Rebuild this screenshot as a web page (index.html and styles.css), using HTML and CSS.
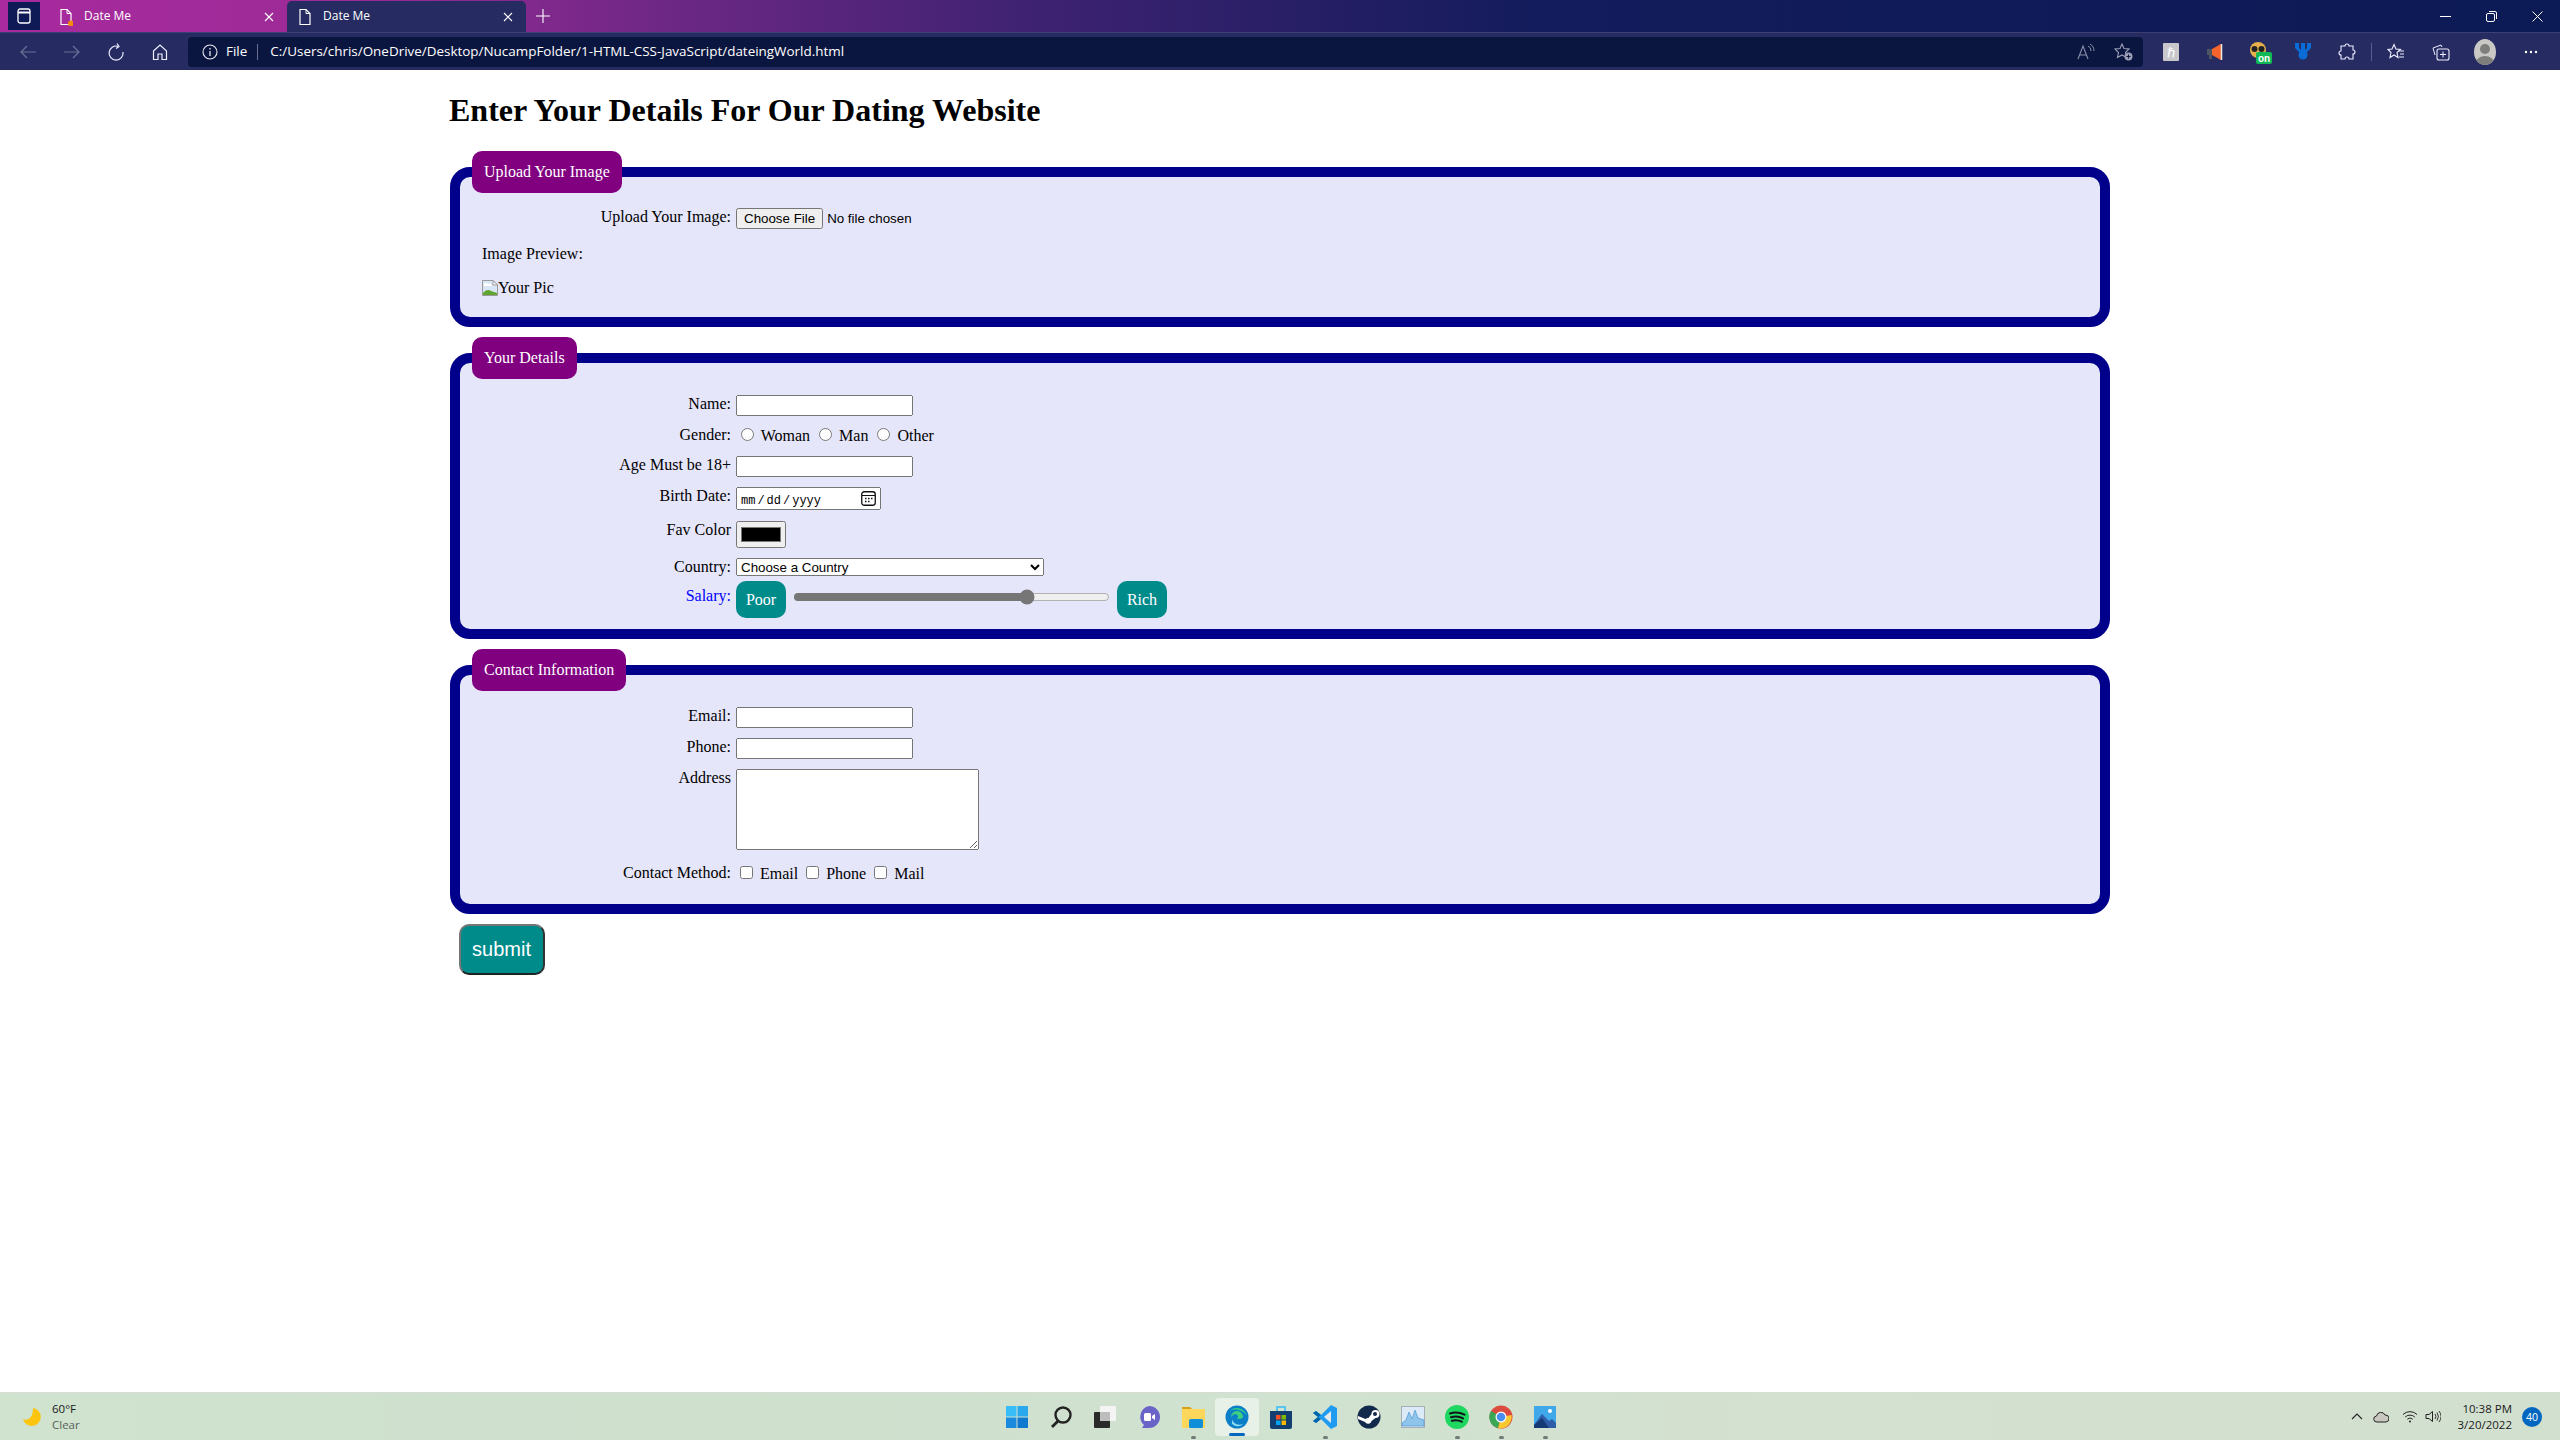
FILE: index.html
```html
<!DOCTYPE html>
<html lang="en">
<head>
<meta charset="utf-8">
<title>Date Me</title>
<link rel="stylesheet" href="styles.css">
</head>
<body>
<div class="browser">
  <header class="tabstrip">
    <div class="appbtn"><svg width="16" height="18" viewBox="0 0 16 18"><rect x="2" y="2" width="12" height="14" rx="2" fill="none" stroke="#fff" stroke-width="1.3"/><path d="M2 5.500h12" stroke="#fff" stroke-width="2"/></svg></div>
    <div class="tab tab-inactive">
      <svg class="docicon" width="14" height="18" viewBox="0 0 14 18"><path d="M2 1.500h6l4 4v11H2z" fill="none" stroke="#fff" stroke-width="1.2"/><path d="M8 1.500v4h4" fill="none" stroke="#fff" stroke-width="1"/><circle cx="12" cy="15.500" r="3" fill="#f58a0b"/></svg>
      <span class="tabtitle">Date Me</span>
      <svg class="tabclose" width="10" height="10" viewBox="0 0 10 10"><path d="M1 1l8 8M9 1l-8 8" stroke="#fff" stroke-width="1.1"/></svg>
    </div>
    <div class="tab tab-active">
      <svg class="docicon" width="14" height="18" viewBox="0 0 14 18"><path d="M2 1.500h6l4 4v11H2z" fill="none" stroke="#fff" stroke-width="1.2"/><path d="M8 1.500v4h4" fill="none" stroke="#fff" stroke-width="1"/></svg>
      <span class="tabtitle">Date Me</span>
      <svg class="tabclose" width="10" height="10" viewBox="0 0 10 10"><path d="M1 1l8 8M9 1l-8 8" stroke="#fff" stroke-width="1.1"/></svg>
    </div>
    <svg class="newtab" width="16" height="16" viewBox="0 0 16 16"><path d="M8 1v14M1 8h14" stroke="#fff" stroke-width="1.1"/></svg>
    <div class="winctl">
      <span class="winbtn"><svg width="11" height="11" viewBox="0 0 11 11"><path d="M0 5.500h11" stroke="#fff"/></svg></span>
      <span class="winbtn"><svg width="11" height="11" viewBox="0 0 11 11"><rect x=".5" y="2.500" width="8" height="8" rx="1.500" fill="none" stroke="#fff"/><path d="M3 .5h6a1.500 1.500 0 0 1 1.500 1.500v6" fill="none" stroke="#fff"/></svg></span>
      <span class="winbtn"><svg width="11" height="11" viewBox="0 0 11 11"><path d="M.5.500l10 10M10.500.500l-10 10" stroke="#fff"/></svg></span>
    </div>
  </header>

  <nav class="toolbar">
    <span class="slot"><svg width="18" height="16" viewBox="0 0 18 16"><path d="M17 8H2M8 2L2 8l6 6" fill="none" stroke="#6b7096" stroke-width="1.200"/></svg></span>
    <span class="slot"><svg width="18" height="16" viewBox="0 0 18 16"><path d="M1 8h15M10 2l6 6-6 6" fill="none" stroke="#6b7096" stroke-width="1.200"/></svg></span>
    <span class="slot"><svg width="18" height="18" viewBox="0 0 18 18"><path d="M11 3.300A7 7 0 1 0 16 9" fill="none" stroke="#eef" stroke-width="1.200"/><path d="M10 .5l2 3-3 2" fill="none" stroke="#eef" stroke-width="1.200"/></svg></span>
    <span class="slot"><svg width="18" height="18" viewBox="0 0 18 18"><path d="M2.500 8L9 2l6.500 6v8.500H11V11H7v5.500H2.500z" fill="none" stroke="#eef" stroke-width="1.200"/></svg></span>
    <div class="address">
      <svg width="16" height="16" viewBox="0 0 16 16"><circle cx="8" cy="8" r="7" fill="none" stroke="#e8e8f0" stroke-width="1.100"/><path d="M8 7v5M8 4v1.400" stroke="#e8e8f0" stroke-width="1.300"/></svg>
      <span class="scheme">File</span>
      <span class="addr-sep"></span>
      <span class="url">C:/Users/chris/OneDrive/Desktop/NucampFolder/1-HTML-CSS-JavaScript/dateingWorld.html</span>
      <span class="addr-icons">
        <svg width="18" height="18" viewBox="0 0 18 18"><path d="M1 16L6 3l5 13M3 12h6" fill="none" stroke="#8a8ea8" stroke-width="1.100"/><path d="M11 3a5 5 0 0 1 3 5M13 1a8 8 0 0 1 4 7" fill="none" stroke="#8a8ea8"/></svg>
        <svg width="20" height="20" viewBox="0 0 20 20"><path d="M8 2l2 4.500 5 .5-3.500 3.500 1 5-4.500-2.500L3.500 15.500l1-5L1 7l5-.5z" fill="none" stroke="#9a9db4" stroke-width="1.100"/><circle cx="14.500" cy="14.500" r="4" fill="#9a9db4"/><path d="M14.500 12.500v4M12.500 14.500h4" stroke="#0b1640"/></svg>
      </span>
    </div>
    <span class="slot slot-first"><svg width="16" height="18" viewBox="0 0 16 18"><rect width="16" height="18" rx="1" fill="#c8c8cc"/><text x="4" y="14" class="ext-h">ℏ</text></svg></span>
    <span class="slot"><svg width="18" height="18" viewBox="0 0 18 18"><path d="M6 6l9-5v16L6 12z" fill="#f4642a"/><path d="M15.500 1v16" stroke="#e8e8e8" stroke-width="1.500"/><rect x="1" y="6" width="5" height="6" fill="#4c5560"/><rect x="3" y="12" width="3" height="4" fill="#4c5560"/></svg></span>
    <span class="slot slot-owl"><svg width="24" height="24" viewBox="0 0 24 24"><circle cx="9" cy="10" r="8" fill="#e8b04a"/><circle cx="5.500" cy="9" r="3" fill="#222"/><circle cx="12.500" cy="9" r="3" fill="#222"/><rect x="7" y="12" width="16" height="12" rx="2" fill="#0fb956"/><text x="9" y="22" class="ext-on">on</text></svg></span>
    <span class="slot"><svg width="18" height="20" viewBox="0 0 18 20"><path d="M1 1h4v5l2 2V1h4v7l2-2V1h4v5l-5 5H6L1 6z" fill="#0a6cd6"/><circle cx="9" cy="13" r="4.500" fill="#0a6cd6"/></svg></span>
    <span class="slot"><svg width="18" height="18" viewBox="0 0 18 18"><path d="M7 3a2 2 0 0 1 4 0h4v4a2 2 0 0 1 0 4v5H11a2 2 0 0 0-4 0H3v-4a2 2 0 0 1 0-4V3z" fill="none" stroke="#eef" stroke-width="1.100"/></svg></span>
    <span class="tool-sep"></span>
    <span class="slot slot-fav"><svg width="18" height="18" viewBox="0 0 18 18"><path d="M7 1.500l2 4.500 4.500.5-3.500 3 1 5-4-2.500-4 2.500 1-5L1 6.500 5 6z" fill="none" stroke="#eef" stroke-width="1.100"/><path d="M12 8h5M13 11h4M12 14h5" stroke="#eef"/></svg></span>
    <span class="slot slot-fav"><svg width="18" height="18" viewBox="0 0 18 18"><path d="M3 12L1 5l8-3 1 2" fill="none" stroke="#eef"/><rect x="5" y="6" width="12" height="11" rx="2" fill="none" stroke="#eef" stroke-width="1.100"/><path d="M11 8.500v6M8 11.500h6" stroke="#eef"/></svg></span>
    <span class="slot slot-fav"><svg width="24" height="26" viewBox="0 0 24 26"><defs><clipPath id="av"><ellipse cx="12" cy="13" rx="11" ry="13"/></clipPath></defs><ellipse cx="12" cy="13" rx="11" ry="13" fill="#c9c8c4"/><g clip-path="url(#av)"><circle cx="12" cy="10" r="5" fill="#7e7e7c"/><ellipse cx="12" cy="24" rx="9" ry="7" fill="#7e7e7c"/></g></svg></span>
    <span class="slot slot-more"><svg width="14" height="4" viewBox="0 0 14 4"><circle cx="2" cy="2" r="1.200" fill="#fff"/><circle cx="7" cy="2" r="1.200" fill="#fff"/><circle cx="12" cy="2" r="1.200" fill="#fff"/></svg></span>
  </nav>

  <div class="page">
    <main class="content">
      <h1>Enter Your Details For Our Dating Website</h1>
      <form>
        <fieldset class="group">
          <legend>Upload Your Image</legend>
          <div class="group-body group-body-first">
            <div class="row"><label class="lbl">Upload Your Image:</label><input class="ctl-file" type="file"></div>
            <p class="plain">Image Preview:</p>
            <p class="plain pic"><svg class="broken" width="16" height="16" viewBox="0 0 16 16"><path d="M.5.500H11L15.500 5v10.500H.5z" fill="#d8e6f6" stroke="#9a9a9a"/><path d="M11 .5V5h4.500z" fill="#fff" stroke="#9a9a9a"/><path d="M2 5a2 1.500 0 0 1 4-1 2 1.500 0 0 1 3 2H2z" fill="#fff"/><path d="M1 15v-2c4-4 6-3 8-2 2 1 4 1 6 2v2z" fill="#5fa52f"/></svg><span>Your Pic</span></p>
          </div>
        </fieldset>

        <fieldset class="group">
          <legend>Your Details</legend>
          <div class="group-body">
            <div class="row"><label class="lbl">Name:</label><input class="ctl-text" type="text"></div>
            <div class="row row-gender"><label class="lbl">Gender:</label><span class="inline"><input type="radio" name="g"> <label>Woman</label> <input type="radio" name="g"> <label>Man</label> <input type="radio" name="g"> <label>Other</label></span></div>
            <div class="row"><label class="lbl">Age Must be 18+</label><input class="ctl-text" type="text"></div>
            <div class="row row-birth"><label class="lbl">Birth Date:</label><input class="ctl-date" type="date"></div>
            <div class="row"><label class="lbl">Fav Color</label><input class="ctl-color" type="color" value="#000000"></div>
            <div class="row row-country"><label class="lbl">Country:</label><select class="ctl-select"><option>Choose a Country</option></select></div>
            <div class="row row-salary"><label class="lbl lbl-salary">Salary:</label><span class="pill">Poor</span><input class="ctl-range" type="range" value="75"><span class="pill">Rich</span></div>
          </div>
        </fieldset>

        <fieldset class="group">
          <legend>Contact Information</legend>
          <div class="group-body">
            <div class="row"><label class="lbl">Email:</label><input class="ctl-text" type="text"></div>
            <div class="row"><label class="lbl">Phone:</label><input class="ctl-text" type="text"></div>
            <div class="row row-address"><label class="lbl">Address</label><textarea class="ctl-area"></textarea></div>
            <div class="row row-method"><label class="lbl">Contact Method:</label><span class="inline"><input type="checkbox"> <label>Email</label> <input type="checkbox"> <label>Phone</label> <input type="checkbox"> <label>Mail</label></span></div>
          </div>
        </fieldset>

        <button class="submit" type="button">submit</button>
      </form>
    </main>
  </div>

  <footer class="taskbar">
    <div class="weather">
      <svg width="20" height="20" viewBox="0 0 20 20"><path d="M11 1a9 9 0 1 1-10 11c4 2 10 0 10-11z" fill="#fbc50f"/></svg>
      <div class="weather-text"><span>60°F</span><span class="muted">Clear</span></div>
    </div>
    <div class="tray-center">
      <span class="tb"><svg width="24" height="24" viewBox="0 0 24 24"><rect x="1" y="1" width="10.500" height="10.500" fill="#38bdf8"/><rect x="12.500" y="1" width="10.500" height="10.500" fill="#2aa8ee"/><rect x="1" y="12.500" width="10.500" height="10.500" fill="#1a8ade"/><rect x="12.500" y="12.500" width="10.500" height="10.500" fill="#0f78cf"/></svg></span>
      <span class="tb"><svg width="24" height="24" viewBox="0 0 24 24"><circle cx="14" cy="10" r="7.500" fill="none" stroke="#222" stroke-width="2.400"/><path d="M9 16l-6 6" stroke="#222" stroke-width="2.800"/></svg></span>
      <span class="tb"><svg width="24" height="24" viewBox="0 0 24 24"><rect x="7" y="1" width="16" height="15" rx="1" fill="#f4f4f4"/><rect x="1" y="7" width="16" height="16" rx="1" fill="#2a2a2a"/><rect x="7" y="7" width="10" height="9" fill="#bdbdbd"/></svg></span>
      <span class="tb"><svg width="24" height="24" viewBox="0 0 24 24"><path d="M12 1a11 11 0 0 1 0 22H5l2-3A11 11 0 0 1 12 1z" fill="#6a64c8"/><rect x="7" y="8" width="7" height="8" rx="1.500" fill="#fff"/><path d="M15 11l3-2v6l-3-2z" fill="#fff"/></svg></span>
      <span class="tb tb-dot"><svg width="24" height="24" viewBox="0 0 24 24"><path d="M1 2h8l2 2h-10z" fill="#d8a218"/><path d="M1 4h23v19H1z" fill="#fcd75c"/><rect x="8" y="14" width="14" height="9" rx="1.500" fill="#0f8fd8"/></svg></span>
      <span class="tb tb-active"><svg width="24" height="24" viewBox="0 0 24 24"><circle cx="12" cy="12" r="11.500" fill="#0b7fc8"/><path d="M6 12a6 6 0 0 1 12 0c0 2-5 2.500-6 1.500 3-3-1-5-3-4-2 1-3 3-3 2.500z" fill="#3dd07e"/><path d="M22 11C20 3 10 .5 4 6c6-3 15-1 18 5z" fill="#2fcf8a"/><path d="M7 13c0 5 5 8 11 6-3 3-8 3-11-.5z" fill="#8fe0f0"/></svg></span>
      <span class="tb"><svg width="24" height="24" viewBox="0 0 24 24"><path d="M1 6h22v16a2 2 0 0 1-2 2H3a2 2 0 0 1-2-2z" fill="#123f70"/><path d="M8 6V2h8v4" fill="none" stroke="#38bdf8" stroke-width="1.600"/><rect x="7" y="10" width="4.500" height="4.500" fill="#f25022"/><rect x="12.500" y="10" width="4.500" height="4.500" fill="#7fba00"/><rect x="7" y="15.500" width="4.500" height="4.500" fill="#00a4ef"/><rect x="12.500" y="15.500" width="4.500" height="4.500" fill="#ffb900"/></svg></span>
      <span class="tb tb-dot"><svg width="24" height="24" viewBox="0 0 24 24"><path d="M18 0l6 3v18l-6 3-10-10-5 4-3-2 5-4-5-4 3-2 5 4z" fill="#1f9cf0"/><path d="M18 6l-7 6 7 6z" fill="#e2e8ec"/><path d="M0 8l3-2 5 4-3 2zM0 16l3 2 5-4-3-2z" fill="#0065a9"/></svg></span>
      <span class="tb"><svg width="24" height="24" viewBox="0 0 24 24"><circle cx="12" cy="12" r="11.500" fill="#11294b"/><path d="M1 14l7 3a3.500 3.500 0 0 0 6.500-1l4-3a4 4 0 1 0-4-4l-3 4a3.500 3.500 0 0 0-3 1L1 11z" fill="#fff"/><circle cx="18" cy="9" r="2" fill="#11294b"/></svg></span>
      <span class="tb"><svg width="24" height="22" viewBox="0 0 24 22"><rect x=".5" y=".5" width="23" height="21" fill="#dce9f6" stroke="#a8aeb6"/><path d="M1 17l4-3 3-8 3 7 3-9 3 8 3 1 3 1v6H1z" fill="#8fc4ea" stroke="#3f92d2" stroke-width=".6"/></svg></span>
      <span class="tb tb-dot"><svg width="24" height="24" viewBox="0 0 24 24"><circle cx="12" cy="12" r="12" fill="#1ed760"/><path d="M5 8.500c5-1.500 10-1 14.500 1.200M6 12.200c4-1 8.500-.8 12 1.200M6.800 15.700c3.500-.8 7-.6 10 1" fill="none" stroke="#13131a" stroke-width="2" stroke-linecap="round"/></svg></span>
      <span class="tb tb-dot"><svg width="24" height="24" viewBox="0 0 24 24"><circle cx="12" cy="12" r="11.500" fill="#dd4b3e"/><path d="M12 12L2 6a11.500 11.500 0 0 0 7 17.200z" fill="#3aa757"/><path d="M12 12l10.500-2A11.500 11.500 0 0 1 9 23.200z" fill="#f7c82f"/><circle cx="12" cy="12" r="5.500" fill="#fff"/><circle cx="12" cy="12" r="4.300" fill="#4a8ef0"/></svg></span>
      <span class="tb tb-dot"><svg width="24" height="24" viewBox="0 0 24 24"><rect x="1" y="1" width="22" height="22" fill="#3ea8e8"/><circle cx="17" cy="6" r="2" fill="#fff"/><path d="M1 20l8-11 7 7 3-2 4 4v5H1z" fill="#2f5ca8"/><path d="M1 23v-3l8-7 7 10z" fill="#133a74"/></svg></span>
    </div>
    <div class="tray-right">
      <svg width="12" height="7" viewBox="0 0 12 7"><path d="M1 6l5-5 5 5" fill="none" stroke="#222" stroke-width="1.100"/></svg>
      <svg class="tray-cloud" width="16" height="12" viewBox="0 0 16 12"><path d="M4 11a3 3 0 0 1-.5-6A4.500 4.500 0 0 1 12 4a3.500 3.500 0 0 1 1 7z" fill="#c8c8c0" stroke="#222" stroke-width="1"/></svg>
      <svg class="tray-wifi" width="16" height="13" viewBox="0 0 16 13"><path d="M1 4.500a10 10 0 0 1 14 0M3.200 7a7 7 0 0 1 9.600 0M5.300 9.200a4 4 0 0 1 5.400 0" fill="none" stroke="#222"/><circle cx="8" cy="11.500" r="1" fill="#222"/></svg>
      <svg class="tray-vol" width="16" height="13" viewBox="0 0 16 13"><path d="M1 4.500h3l3.500-3v10l-3.500-3H1z" fill="none" stroke="#222"/><path d="M10 4a4 4 0 0 1 0 5M12 2.500a7 7 0 0 1 0 8M14 1a9 9 0 0 1 0 11" fill="none" stroke="#222" stroke-width=".9"/></svg>
      <div class="clock"><span>10:38 PM</span><span>3/20/2022</span></div>
      <span class="badge">40</span>
    </div>
  </footer>
</div>
</body>
</html>
```

FILE: styles.css
```css
* { box-sizing: border-box; }
html, body { margin: 0; padding: 0; height: 100%; }
body { font-family: "Liberation Serif", "Times New Roman", serif; font-size: 16px; color: #000; background: #fff; overflow: hidden; }
.browser { display: flex; flex-direction: column; height: 1440px; }

/* tab strip */
.tabstrip { height: 32px; flex: none; display: flex; align-items: flex-end; padding-left: 8px;
  background: linear-gradient(90deg, #a82a9e 0%, #9b2b96 14%, #6a2784 27%, #3f2272 40%, #131c5c 60%, #0c1a55 100%);
  font-family: "Open Sans", "Noto Sans", sans-serif; color: #fff; font-size: 12px; }
.appbtn { width: 32px; height: 28px; margin: 0 8px 2px 0; background: #0d1a55; display: flex; align-items: center; justify-content: center; }
.tab { width: 239px; height: 31px; display: flex; align-items: center; padding-left: 11px; padding-right: 13px; }
.tab-active { background: #262c62; border-radius: 5px 5px 0 0; }
.tab-inactive { padding-left: 11px; }
.docicon { flex: none; }
.tabtitle { margin-left: 11px; flex: 1; padding-bottom: 2px; }
.newtab { margin: 0 0 8px 9px; }
.winctl { margin-left: auto; display: flex; height: 32px; align-items: center; padding-right: 0; }
.winbtn { width: 46px; height: 32px; display: flex; align-items: center; justify-content: center; }

/* toolbar */
.toolbar { height: 38px; flex: none; display: flex; align-items: center; padding-left: 6px; background: #262c62; border-top: 1px solid #3c3f74; color: #fff; font-family: "Open Sans", "Noto Sans", sans-serif; font-size: 13.450px; }
.slot { width: 44px; height: 30px; display: flex; align-items: center; justify-content: center; flex: none; }
.slot-first { margin-left: 6px; }
.slot-fav { width: 44.500px; }
.slot-more { width: 46px; }
.slot-owl { padding-left: 4px; }
.tool-sep { width: 1px; height: 18px; background: #5a5e8c; margin: 0 2px; flex: none; }
.address { margin-left: 6px; width: 1955px; height: 30px; flex: none; display: flex; align-items: center; padding-left: 14px; padding-right: 0; background: #0b1640; border-radius: 4px; }
.scheme { margin-left: 8px; padding-bottom: 2px; }
.addr-sep { width: 1px; height: 16px; background: #6a6e90; margin: 0 12px 0 10px; }
.url { color: #fff; padding-bottom: 2px; }
.addr-icons { margin-left: auto; display: flex; align-items: center; gap: 19px; padding-right: 9px; }
.ext-h { font-size: 13px; fill: #fff; font-family: "DejaVu Sans", sans-serif; }
.ext-on { font-size: 10px; font-weight: 700; fill: #fff; font-family: "Liberation Sans", sans-serif; }

/* page */
.page { flex: 1; background: #fff; min-height: 0; }
.content { width: 1660px; margin: 0 auto; }
h1 { font-size: 32px; font-weight: 700; margin: 22px 0 22px -1px; line-height: 37px; }
form { display: block; }
.group { margin: 0 0 10px; padding: 0 12px; min-width: 0; border: 10px solid #00008b; border-radius: 20px; background: #e6e6fa; }
.group legend { background: #800080; color: #fff; padding: 12px; line-height: 18px; border-radius: 10px; }
.group-body { padding: 16px 10px 12px; }
.group-body-first { padding-top: 15px; }
.row { display: flex; align-items: flex-start; margin-bottom: 10px; line-height: 18px; }
.lbl { width: 249px; margin-right: 5px; text-align: right; flex: none; }
.row-gender { height: 18px; margin-bottom: 12px; }
.row-birth { margin-bottom: 11px; }
.row-address { margin-bottom: 14px; }
.row-method { height: 18px; }
.row-country { margin-bottom: 5px; }
.row-salary { margin-bottom: -1px; }
.lbl-salary { color: #00f; margin-top: 6px; }
.inline { display: block; white-space: nowrap; margin-top: -1px; }
.plain { margin: 16px 0; line-height: 18px; }
.plain.pic { margin: 17px 0 9px; display: flex; align-items: center; height: 16px; }
.broken { flex: none; }

input, select, textarea, button { font-family: "Liberation Sans", Arial, sans-serif; font-size: 13.333px; }
.ctl-text { width: 177px; height: 21px; margin: 0; padding: 1px 2px; }
.ctl-file { margin: 0; height: 21px; width: 260px; }
.ctl-date { width: 145px; height: 23px; margin: 0; padding: 4px 2px 0; font-family: "Liberation Mono", monospace; font-size: 12px; }
.ctl-date::-webkit-datetime-edit-text { padding: 0 1px; }
.ctl-date::-webkit-calendar-picker-indicator { width: 15px; height: 15px; padding: 0; margin: -4px 1px 0 0; background: url("data:image/svg+xml,%3Csvg xmlns='http://www.w3.org/2000/svg' width='15' height='15' viewBox='0 0 15 15'%3E%3Crect x='.75' y='.75' width='13.500' height='13.500' rx='2.500' fill='none' stroke='%23111' stroke-width='1.300'/%3E%3Cpath d='M1 4.500h13' stroke='%23111'/%3E%3Cpath d='M4 7.500h1.500M7 7.500h1.500M10 7.500h1.500M4 10.500h1.500M7 10.500h1.500' stroke='%23111' stroke-width='1.400'/%3E%3C/svg%3E") no-repeat center; }
.ctl-color { width: 50px; height: 27px; margin: 0; }
.ctl-select { width: 308px; height: 18px; margin: 0; }
.ctl-area { width: 243px; height: 81px; margin: 0; display: block; }
.ctl-range { width: 317px; height: 16px; margin: 8px 7px 0; accent-color: #767676; }
.pill { width: 50px; height: 37px; background: #008b8b; color: #fff; border-radius: 10px; display: flex; align-items: center; justify-content: center; padding-top: 1px; font-size: 16px; flex: none; }
.submit { display: block; width: 86px; height: 51px; margin: 0 0 0 8.500px; padding: 0; background: #008b8b; color: #fff; font-size: 20px; border: 2px solid; border-color: #767676 #333 #222 #767676; border-radius: 10px; }

/* taskbar */
.taskbar { height: 48px; flex: none; display: grid; grid-template-columns: 1fr auto 1fr; align-items: center; border-top: 1px solid #d4dcd4;
  background: linear-gradient(90deg, #cfe3cf 0%, #cfe0cd 30%, #d0e2d0 50%, #d4e0d0 70%, #d2e0d0 100%);
  font-family: "Open Sans", "Noto Sans", sans-serif; font-size: 11.500px; color: #1a1a1a; }
.weather { display: flex; align-items: center; padding-left: 22px; gap: 10px; }
.weather-text { display: flex; flex-direction: column; line-height: 16px; }
.muted { color: #5a5f5a; }
.tray-center { display: flex; align-items: center; height: 47px; padding-left: 2px; }
.tb { width: 44px; height: 38px; position: relative; display: flex; align-items: center; justify-content: center; }
.tb-active { background: rgba(255, 255, 255, .5); border-radius: 4px; }
.tb-dot::after { content: ""; position: absolute; left: 19.500px; bottom: -3px; width: 5px; height: 3px; border-radius: 2px; background: #737a7a; }
.tb-active::after { content: ""; position: absolute; left: 14px; bottom: 0; width: 16px; height: 3px; border-radius: 2px; background: #0067c0; }
.tray-right { display: flex; align-items: center; justify-content: flex-end; padding-right: 18px; }
.tray-cloud { margin-left: 10px; }
.tray-wifi { margin-left: 13px; }
.tray-vol { margin-left: 7px; }
.clock { display: flex; flex-direction: column; align-items: flex-end; line-height: 16px; margin-left: 17px; }
.badge { width: 20px; height: 20px; margin-left: 10px; border-radius: 50%; background: #0067c0; color: #fff; font-size: 10.500px; display: flex; align-items: center; justify-content: center; }
```
